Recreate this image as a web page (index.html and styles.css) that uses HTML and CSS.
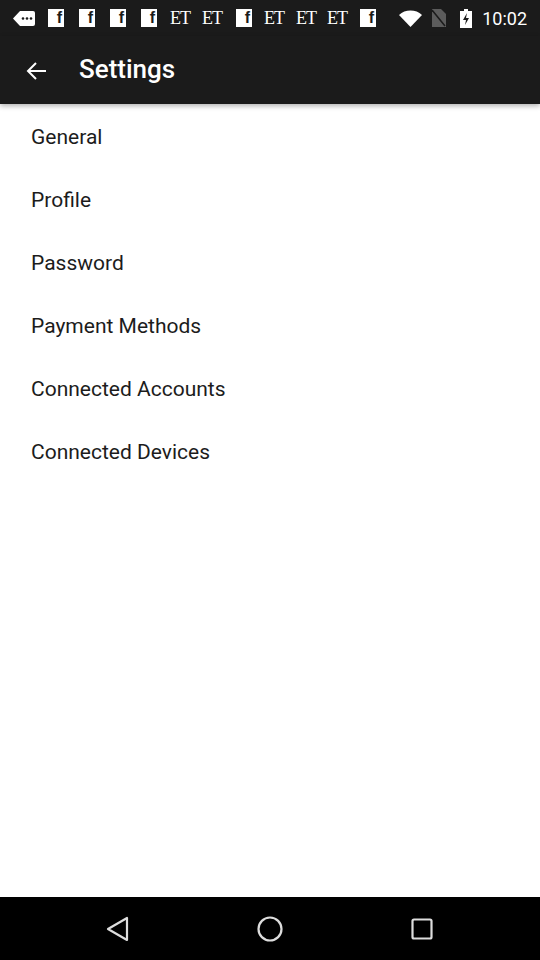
FILE: index.html
```html
<!DOCTYPE html>
<html>
<head>
<meta charset="utf-8">
<link rel="stylesheet" href="styles.css">
</head>
<body>
<div class="screen">
  <div class="status">
    <div class="notifs">
      <svg class="msg" width="22" height="15" viewBox="0 0 22 15"><path d="M7 0H20a2 2 0 0 1 2 2V13a2 2 0 0 1-2 2H7L0 7.5Z" fill="#fff"/><circle cx="10" cy="7.5" r="1.3" fill="#1b1b1b"/><circle cx="14" cy="7.5" r="1.3" fill="#1b1b1b"/><circle cx="18" cy="7.5" r="1.3" fill="#1b1b1b"/></svg>
      <span class="fb f1">f</span>
      <span class="fb f2">f</span>
      <span class="fb f3">f</span>
      <span class="fb f4">f</span>
      <span class="et e1">ET</span>
      <span class="et e2">ET</span>
      <span class="fb f5">f</span>
      <span class="et e3">ET</span>
      <span class="et e4">ET</span>
      <span class="et e5">ET</span>
      <span class="fb f6">f</span>
    </div>
    <div class="sys">
      <svg class="wifi" width="23" height="17" viewBox="0 0 23 17"><path d="M0 5A17 17 0 0 1 23 5L11.5 17Z" fill="#fff"/></svg>
      <svg class="sim" width="14" height="18" viewBox="0 0 14 18"><path d="M0 0H9L14 5V18H0Z" fill="#5c5c5c"/><path d="M0 1L13 17" stroke="#1b1b1b" stroke-width="1.5"/></svg>
      <svg class="bat" width="12" height="19" viewBox="0 0 12 19"><path d="M4 0H8V2H12V19H0V2H4Z" fill="#fff"/><path d="M7 4L3 11H6L5 16L9 9H6Z" fill="#1b1b1b"/></svg>
      <span class="time">10:02</span>
    </div>
  </div>
  <div class="toolbar">
    <svg class="back" width="21" height="20" viewBox="0 0 21 20"><path d="M20 10H2.5M10 2L2 10L10 18" stroke="#fff" stroke-width="2" fill="none"/></svg>
    <span class="title">Settings</span>
  </div>
  <ul class="list">
    <li>General</li>
    <li>Profile</li>
    <li>Password</li>
    <li>Payment Methods</li>
    <li>Connected Accounts</li>
    <li>Connected Devices</li>
  </ul>
  <div class="nav">
    <div class="slot"><svg width="24" height="26" viewBox="0 0 24 26"><path d="M21 2V24L2 13Z" stroke="#ddd" stroke-width="2.2" fill="none" stroke-linejoin="round"/></svg></div>
    <div class="slot"><svg width="26" height="26" viewBox="0 0 26 26"><circle cx="13" cy="13" r="11.5" stroke="#ddd" stroke-width="2.2" fill="none"/></svg></div>
    <div class="slot"><svg width="22" height="22" viewBox="0 0 22 22"><rect x="1.5" y="1.5" width="19" height="19" rx="1.5" stroke="#ddd" stroke-width="2.2" fill="none"/></svg></div>
  </div>
</div>
</body>
</html>
```
FILE: styles.css
```css
* { box-sizing: border-box; }
html, body { margin: 0; padding: 0; }
body { font-family: Roboto, "Noto Sans", sans-serif; background: #fff; }
.screen { width: 540px; height: 960px; display: flex; flex-direction: column; overflow: hidden; }
.status { height: 36px; background: #1b1b1b; display: flex; align-items: center; justify-content: space-between; padding: 0 13px 0 13px; color: #fff; }
.notifs { display: flex; align-items: center; }
.msg { margin-right: 13px; }
.fb { width: 16px; height: 18px; background: #fff; color: #1b1b1b; font-family: "Liberation Sans", sans-serif; font-weight: bold; font-size: 16px; line-height: 18px; display: flex; justify-content: flex-end; align-items: flex-end; padding-right: 2px; }
.f1, .f2, .f3 { margin-right: 15px; }
.f4 { margin-right: 13px; }
.f5 { margin-right: 12px; }
.f6 { margin-right: 0; }
.et { font-family: "Liberation Serif", serif; font-size: 18px; line-height: 20px; color: #fff; letter-spacing: -1px; width: 20px; }
.e1 { margin-right: 12px; }
.e2 { margin-right: 14px; }
.e3 { margin-right: 12px; }
.e4 { margin-right: 11px; }
.e5 { margin-right: 13px; }
.sys { display: flex; align-items: center; }
.wifi { margin-right: 10px; }
.sim { margin-right: 14px; }
.bat { margin-right: 10px; }
.time { font-size: 18px; color: #fff; }
.toolbar { height: 68px; background: #1b1b1b; display: flex; align-items: center; padding-left: 26px; box-shadow: 0 2px 5px rgba(0,0,0,0.3); position: relative; z-index: 1; }
.back { margin-right: 32px; margin-top: 2px; }
.title { color: #fff; font-size: 26px; font-weight: 500; margin-top: -2px; }
.list { list-style: none; margin: 0; padding: 1px 0 0 0; flex: 1; }
.list li { height: 63px; display: flex; align-items: center; padding-left: 31px; font-size: 21px; color: #1c1c1c; }
.nav { height: 63px; background: #000; display: flex; align-items: center; padding: 0 42px; }
.slot { flex: 1; display: flex; justify-content: center; align-items: center; }
.slot svg { display: block; }
```
